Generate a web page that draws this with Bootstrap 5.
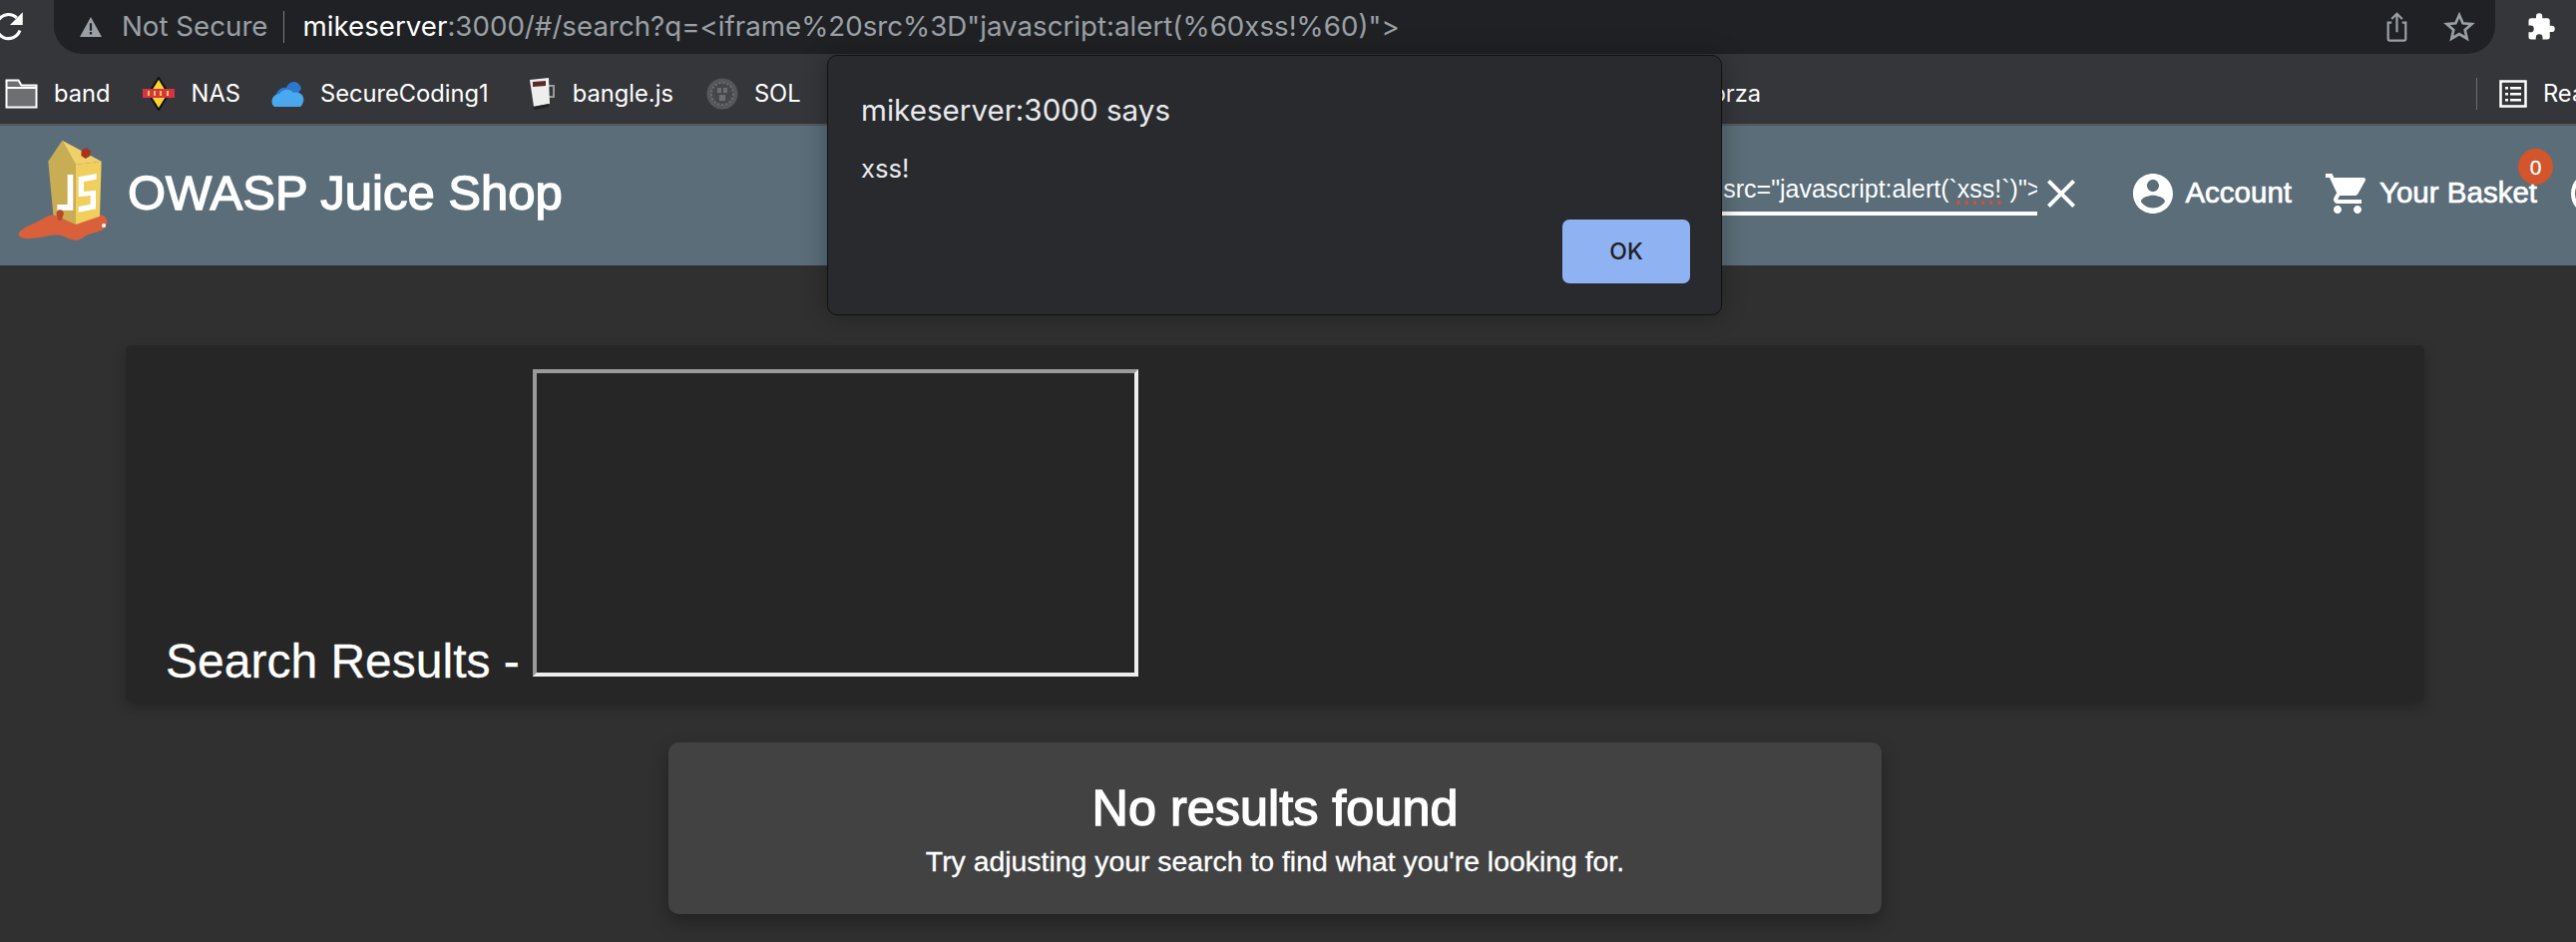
<!DOCTYPE html>
<html lang="en">
<head>
    <meta charset="UTF-8">
    <meta name="viewport" content="width=device-width, initial-scale=1.0">
    <title>OWASP Juice Shop</title>
    <link href="https://cdn.jsdelivr.net/npm/bootstrap@5.3.3/dist/css/bootstrap.min.css" rel="stylesheet">
    <style>
        html, body {
            height: 944px;
            overflow: hidden;
        }

        body {
            position: relative;
            background: #303030;
            font-family: "Liberation Sans", Arial, sans-serif;
            color: #fff;
        }

        /* browser chrome */
        .tool-bar {
            height: 54px;
            background: #35363a;
            overflow: hidden;
        }

        .reload-box {
            width: 54px;
            flex: none;
        }

        .reload-icon { margin-left: -7px; }

        .addr-bar {
            width: 2447px;
            height: 54px;
            background: #202124;
            border-radius: 0 0 28px 28px;
            padding-left: 24px;
            padding-right: 20px;
            font-family: Inter, sans-serif;
            font-size: 27.7px;
            flex: none;
        }

        .warn-icon { margin-right: 18px; }
        .not-secure { color: #9aa0a6; }
        .addr-sep { width: 1px; height: 32px; background: #7a7d82; margin: 0 19px 0 15px; }
        .addr-rest { color: #9aa0a6; white-space: nowrap; }
        .addr-host { color: #fff; }
        .addr-icons { gap: 35px; }

        .mark-bar {
            height: 72px;
            background: #35363a;
            border-bottom: 2px solid #55575b;
            font-family: Inter, sans-serif;
            font-size: 23.7px;
            padding: 10px 0 0 5px;
            white-space: nowrap;
            overflow: hidden;
        }

        .mark-item { gap: 16px; margin-right: 33px; }
        .mark-item:nth-child(1), .mark-item:nth-child(2) { margin-right: 31px; }
        .mark-item:nth-child(3) { margin-right: 38px; }
        .mark-gap { width: 867px; flex: none; }
        .mark-last { margin-left: auto; margin-right: -104px; flex: none; }
        .mark-sep { width: 1px; height: 32px; background: #6b6d71; margin-right: 22px; }

        /* app toolbar */
        .app-bar {
            height: 140px;
            background: #5a6d78;
            overflow: hidden;
        }

        .logo-icon { margin-top: -12px; }

        .app-title {
            font-size: 49px;
            -webkit-text-stroke: 1.4px #fff;
            margin: -5px 0 0 -12px;
        }

        .bar-right {
            margin-top: -5px;
            margin-right: -41px;
        }

        .search-box {
            width: 410px;
            height: 48px;
            margin-top: -3px;
            border-bottom: 4px solid #fff;
            font-size: 25px;
            overflow: hidden;
            white-space: nowrap;
        }

        .search-val { margin-right: -4px; }

        .spell-err {
            text-decoration: underline dotted #d2503c 4px;
            text-underline-offset: 3px;
        }

        .bar-btn {
            font-size: 29.5px;
            -webkit-text-stroke: .7px #fff;
            white-space: nowrap;
        }

        .btn-account { margin-left: 44px; }
        .btn-basket, .lang-icon { margin-left: 32px; }

        .basket-count {
            top: -22px;
            right: -16px;
            width: 35px;
            height: 36px;
            background: #d2552b;
            font-size: 21px;
            -webkit-text-stroke: .3px #fff;
        }

        /* results */
        .page-main {
            width: 2304px;
            margin-left: 126px;
            padding-top: 80px;
        }

        .title-card {
            height: 357px;
            background: #262626;
            border: 0;
            border-radius: 6px;
            padding: 24px 0 25px 40px;
            box-shadow: 0 6px 14px rgba(0, 0, 0, .25);
            color: #fff;
        }

        .title-text {
            font-size: 48px;
            line-height: 1;
            margin-right: 13px;
            margin-bottom: -9px;
            -webkit-text-stroke: .3px #fff;
        }

        .frame-box {
            width: 607px;
            height: 308px;
            border: 4px solid;
            border-color: #9a9a9a #eeeeee #eeeeee #9a9a9a;
        }

        .empty-card {
            width: 1216px;
            height: 172px;
            margin: 41px auto 0 544px;
            background: #424242;
            border: 0;
            border-radius: 10px;
            box-shadow: 0 8px 18px rgba(0, 0, 0, .3);
            color: #fff;
        }

        .empty-title { font-size: 50.4px; -webkit-text-stroke: 1.4px #fff; line-height: 1.15; margin: 2px 0 7px; }
        .empty-text { font-size: 28.4px; line-height: 1.2; margin: 0; -webkit-text-stroke: .3px #fff; }

        /* alert dialog */
        .alert-box {
            position: absolute;
            top: 55px;
            left: 829px;
            width: 897px;
            height: 261px;
            padding: 33px 31px 31px 33px;
            background: #292a2d;
            border: 1px solid #111;
            border-radius: 10px;
            box-shadow: 0 0 24px rgba(0, 0, 0, .3);
            font-family: Inter, sans-serif;
        }

        .alert-head { font-size: 29.6px; line-height: 42px; color: #e8eaed; }
        .alert-msg { font-size: 25.6px; line-height: 38px; margin-top: 19px; color: #e8eaed; }

        .ok-btn {
            width: 128px;
            height: 64px;
            background: #8fb2f2;
            border: 0;
            border-radius: 7px;
            color: #202124;
            font-size: 23px;
            font-weight: 500;
        }
    </style>
</head>
<body>
    <div class="tool-bar d-flex">
        <div class="reload-box d-flex align-items-center">
            <svg width="34" height="34" viewBox="0 0 24 24" class="reload-icon flex-shrink-0"><path fill="none" stroke="#fff" stroke-width="2.2" d="M19 14.500A8.500 8.500 0 1 1 16.800 5.500"/><path fill="#fff" d="M21 1.500v9h-9z"/></svg>
        </div>
        <div class="addr-bar d-flex align-items-center">
            <svg width="26" height="22" viewBox="0 0 26 24" class="warn-icon"><path fill="#9aa0a6" d="M13 1 25 23H1z"/><path fill="#202124" d="M11.800 8h2.400v8h-2.400zM11.800 17.500h2.400v2.600h-2.400z"/></svg>
            <span class="not-secure">Not Secure</span>
            <span class="addr-sep"></span>
            <span class="addr-rest"><span class="addr-host">mikeserver</span>:3000/#/search?q=&lt;iframe%20src%3D"javascript:alert(%60xss!%60)"&gt;</span>
            <div class="ms-auto d-flex align-items-center addr-icons">
                <svg width="23" height="30" viewBox="0 0 26 34"><path fill="none" stroke="#9aa0a6" stroke-width="2.5" d="M7 12H3v19a1.500 1.500 0 0 0 1.500 1.500h17A1.500 1.500 0 0 0 23 31V12h-4M13 23V2M7 8l6-6 6 6"/></svg>
                <svg width="32" height="32" viewBox="0 0 24 24"><path fill="none" stroke="#9aa0a6" stroke-width="2" d="M12 3l2.700 6.200 6.700.6-5.100 4.400 1.500 6.600L12 17.300l-5.800 3.500 1.500-6.600-5.100-4.400 6.700-.6z"/></svg>
            </div>
        </div>
        <div class="ms-auto d-flex align-items-center pe-3">
            <svg width="30" height="34" viewBox="0 0 24 24" class="me-1"><path fill="#fff" d="M20.500 11H19V7a2 2 0 0 0-2-2h-4V3.500a2.500 2.500 0 0 0-5 0V5H4a2 2 0 0 0-2 2v3.800h1.500a2.700 2.700 0 0 1 0 5.400H2V20a2 2 0 0 0 2 2h3.800v-1.500a2.700 2.700 0 0 1 5.400 0V22H17a2 2 0 0 0 2-2v-4h1.500a2.500 2.500 0 0 0 0-5z"/></svg>
        </div>
    </div>

    <div class="mark-bar d-flex align-items-center">
        <div class="mark-item d-flex align-items-center">
            <svg width="33" height="30" viewBox="0 0 33 30"><path fill="#6e6f72" stroke="#fff" stroke-width="2" d="M1.500 28.500V1.500h12l3 5h15v22z"/><path fill="none" stroke="#fff" stroke-width="2" d="M1.500 9h30"/></svg>
            <span>band</span>
        </div>
        <div class="mark-item d-flex align-items-center">
            <svg width="34" height="34" viewBox="0 0 34 34"><path fill="#f7d52e" stroke="#111" stroke-width="2" d="M17 1 27 17 17 33 7 17z"/><path fill="#d8314a" d="M1 12h32v9H1z"/><path fill="#f7d52e" d="M6 14h2v5H6zM12 14h2v5h-2zM18 14h2v5h-2zM25 14h2v5h-2z"/></svg>
            <span>NAS</span>
        </div>
        <div class="mark-item d-flex align-items-center">
            <svg width="33" height="30" viewBox="0 0 33 30"><path fill="#2b78cf" d="M5 22C3 10 12 8 15 9c3-8 13-8 15 1l-10 14z"/><path fill="#4aa8ec" d="M3 28c-5-4-2-13 5-13 3-5 11-6 14-1 6-2 12 3 10 9-1 3-2 5-4 5z"/></svg>
            <span>SecureCoding1</span>
        </div>
        <div class="mark-item d-flex align-items-center">
            <svg width="30" height="34" viewBox="0 0 30 34"><path fill="none" stroke="#999" stroke-width="2" d="M22 9h5v11h-5"/><path fill="#eee" d="M3 3l19-2 1 26-16 3z"/><path fill="#5a2b24" d="M6 5l13-1v5L6 10z"/><path fill="#222" d="M6 30l16-3v3L8 33z"/></svg>
            <span>bangle.js</span>
        </div>
        <div class="mark-item d-flex align-items-center">
            <svg width="32" height="32" viewBox="0 0 32 32"><circle cx="16" cy="16" r="15.500" fill="#55575a"/><circle cx="16" cy="16" r="11" fill="#45474a" stroke="#6b6d70" stroke-width="2" stroke-dasharray="2 2"/><path fill="#6b6d70" d="M11 10h4v5h-4zM17 10h4v5h-4zM13 17h6v6h-6z"/></svg>
            <span>SOL</span>
        </div>
        <span class="mark-gap"></span>
        <span>Forza</span>
        <div class="mark-last d-flex align-items-center">
            <span class="mark-sep"></span>
            <svg width="28" height="28" viewBox="0 0 28 28" class="me-3"><path fill="none" stroke="#fff" stroke-width="2.500" d="M1.500 1.500h25v25h-25z"/><path fill="#fff" d="M6 7h3v2.500H6zM11 7h11v2.500H11zM6 13h3v2.500H6zM11 13h11v2.500H11zM6 19h3v2.500H6zM11 19h11v2.500H11z"/></svg>
            <span>Reading List</span>
        </div>
    </div>

    <nav class="app-bar d-flex align-items-center">
        <svg width="140" height="140" viewBox="0 0 420 420" class="flex-shrink-0 logo-icon">
            <path fill="#d9603a" d="M55 345c5-20 45-30 70-45 20-14 45-20 60-10 30 6 70 0 110-5 30 0 35 30 15 45-20 12-45 10-60 25-15 12-35 8-55-3-25-12-50-2-80 3-25 4-55 5-60-10z"/>
            <path fill="#c9ad55" d="M145 125 187 62l41 73v180l-68-30z"/>
            <path fill="#f0cf5f" d="M228 135l77-10-5 165-72 25z"/>
            <path fill="#efd06b" d="M187 62 305 125l-77 10z"/>
            <path fill="#a8321c" d="M245 92l14-8 14 10-2 15-14 8-13-9z"/>
            <path fill="#fff" d="M203 165h17v107h-48v-17h31zM236 172l54-10v17l-38 7v30l36-4v56l-52 10v-17l36-7v-26l-36 4z"/>
            <path fill="#b8482a" d="M170 285a11 11 0 1 1 21 0l-6 17h-10z"/>
            <circle cx="312" cy="318" r="6" fill="#fff"/>
        </svg>
        <span class="app-title">OWASP Juice Shop</span>
        <div class="ms-auto d-flex align-items-center bar-right">
            <div class="search-box d-flex justify-content-end align-items-center">
                <span class="search-val flex-shrink-0">&lt;iframe src="javascript:alert(`<span class="spell-err">xss!</span>`)"&gt;</span>
            </div>
            <svg width="48" height="48" viewBox="0 0 24 24" class="flex-shrink-0"><path fill="#fff" d="M19 6.410 17.590 5 12 10.590 6.410 5 5 6.410 10.590 12 5 17.590 6.410 19 12 13.410 17.590 19 19 17.590 13.410 12z"/></svg>
            <div class="bar-btn btn-account d-flex align-items-center">
                <svg width="48" height="48" viewBox="0 0 24 24" class="flex-shrink-0"><path fill="#fff" d="M12 2C6.480 2 2 6.480 2 12s4.480 10 10 10 10-4.480 10-10S17.520 2 12 2zm0 3c1.660 0 3 1.340 3 3s-1.340 3-3 3-3-1.340-3-3 1.340-3 3-3zm0 14.200c-2.500 0-4.710-1.280-6-3.220.03-1.990 4-3.080 6-3.080 1.990 0 5.970 1.090 6 3.080-1.290 1.940-3.500 3.220-6 3.220z"/></svg>
                <span class="ms-2">Account</span>
            </div>
            <div class="bar-btn btn-basket d-flex align-items-center">
                <svg width="48" height="48" viewBox="0 0 24 24" class="flex-shrink-0"><path fill="#fff" d="M7 18c-1.100 0-1.990.9-1.990 2S5.900 22 7 22s2-.9 2-2-.9-2-2-2zM1 2v2h2l3.600 7.590-1.350 2.450c-.16.28-.25.61-.25.96 0 1.100.9 2 2 2h12v-2H7.420c-.14 0-.25-.11-.25-.25l.03-.12.9-1.630h7.450c.75 0 1.410-.41 1.750-1.030l3.580-6.490c.08-.14.12-.31.12-.48 0-.55-.45-1-1-1H5.210l-.94-2H1zm16 16c-1.100 0-1.990.9-1.990 2s.89 2 1.990 2 2-.9 2-2-.9-2-2-2z"/></svg>
                <span class="position-relative ms-2">Your Basket<span class="basket-count position-absolute rounded-circle d-flex align-items-center justify-content-center">0</span></span>
            </div>
            <svg width="48" height="48" viewBox="0 0 24 24" class="flex-shrink-0 lang-icon"><circle cx="12" cy="12" r="10" fill="none" stroke="#fff" stroke-width="2"/></svg>
        </div>
    </nav>

    <main class="page-main">
        <div class="card title-card d-flex flex-row align-items-end">
            <h1 class="title-text fw-normal">Search Results -</h1>
            <div class="frame-box"></div>
        </div>
        <div class="card empty-card text-center justify-content-center">
            <h2 class="empty-title fw-normal">No results found</h2>
            <p class="empty-text">Try adjusting your search to find what you're looking for.</p>
        </div>
    </main>

    <div class="alert-box d-flex flex-column">
        <div class="alert-head">mikeserver:3000 says</div>
        <div class="alert-msg">xss!</div>
        <div class="mt-auto d-flex justify-content-end">
            <button type="button" class="btn ok-btn">OK</button>
        </div>
    </div>
    <script src="https://cdn.jsdelivr.net/npm/bootstrap@5.3.3/dist/js/bootstrap.bundle.min.js"></script>
</body>
</html>
